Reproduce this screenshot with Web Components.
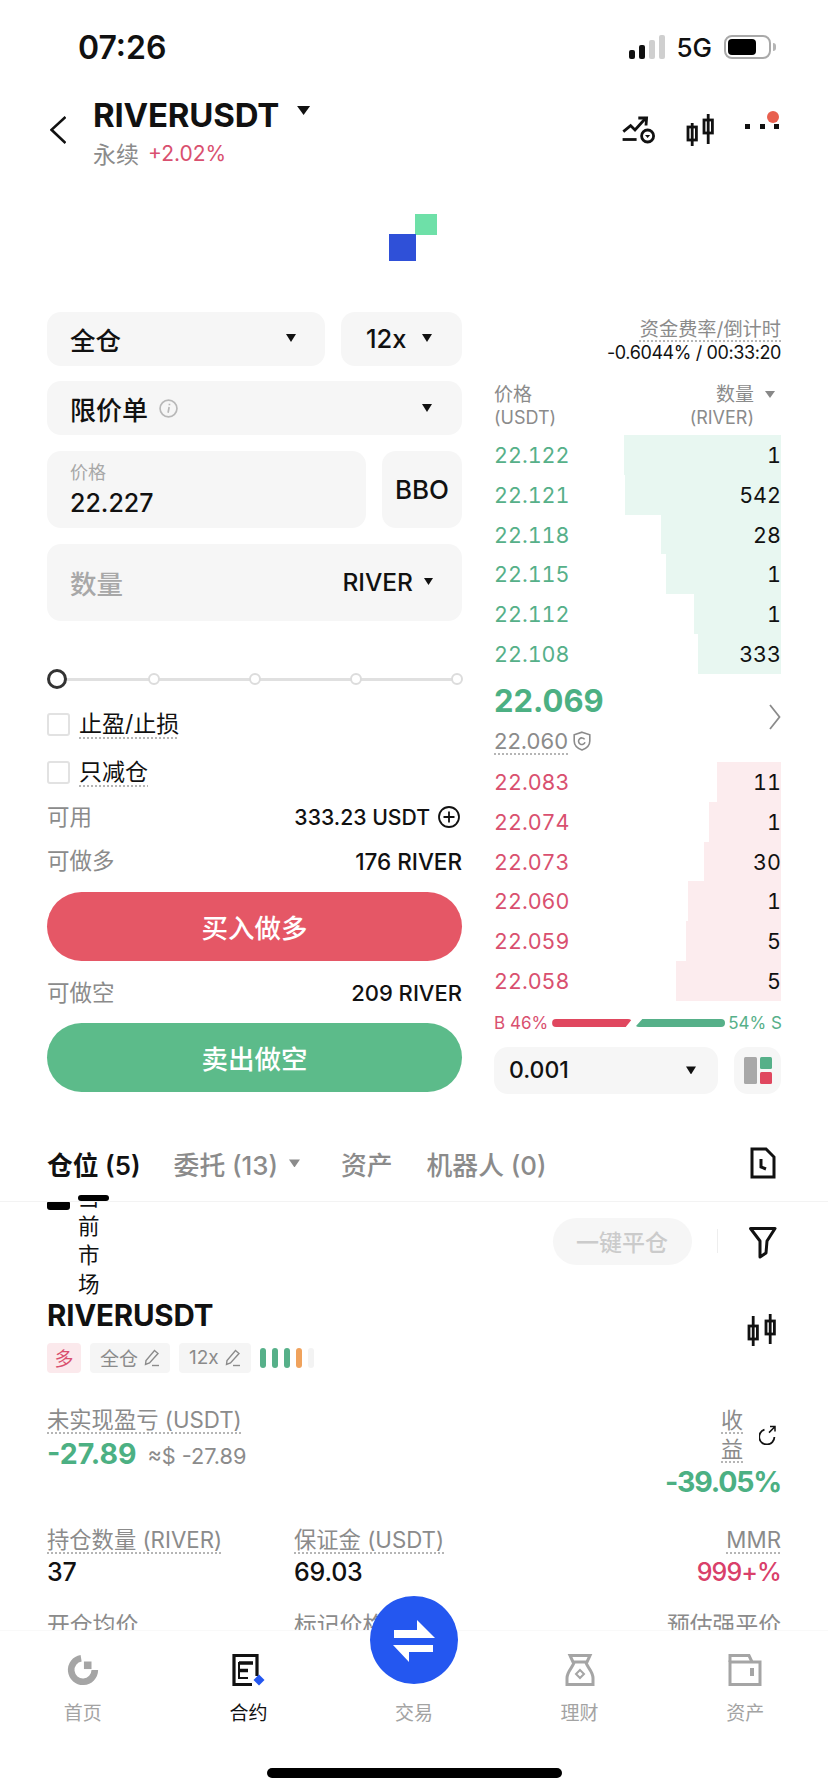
<!DOCTYPE html>
<html lang="zh">
<head>
<meta charset="utf-8">
<title>RIVERUSDT</title>
<style>
  html, body { margin: 0; background: #fff; }
  body { font-family: Inter, "Noto Sans CJK SC", sans-serif; color: #111; }
</style>
</head>
<body>
<trade-app></trade-app>

<script>
const GREEN = "#56b089";
const RED = "#d9506f";
const GRAY = "#8b8b8b";

class CaretMark extends HTMLElement {
    constructor() {
        super();
        this.attachShadow({mode: "open"}).innerHTML = `
            <style>
                :host { display: inline-block; width: 10px; height: 8px; background: #111;
                    clip-path: polygon(0 0, 100% 0, 50% 100%); flex: none; }
            </style>`;
    }
}

class StatusBar extends HTMLElement {
    constructor() {
        super();
        this.attachShadow({mode: "open"}).innerHTML = `
            <style>
                :host { display: flex; align-items: center; height: 94px; padding: 0 52px 0 78px; box-sizing: border-box; }
                .time { font-size: 32px; font-weight: 600; letter-spacing: 0; }
                .right { margin-left: auto; display: flex; align-items: center; }
                .signal { display: flex; align-items: flex-end; gap: 4px; height: 24px; }
                .signal i { display: block; width: 6px; border-radius: 2px; background: #111; }
                .signal i.off { background: #cfcfcf; }
                .net { font-size: 26px; font-weight: 500; margin: 0 12px 0 11px; }
                .battery { width: 47px; height: 24px; box-sizing: border-box; border: 2px solid #a9a9a9; border-radius: 8px; padding: 2px; }
                .battery b { display: block; width: 28px; height: 16px; background: #000; border-radius: 4px; }
                .nub { width: 3px; height: 8px; margin-left: 2px; background: #b5b5b5; border-radius: 0 3px 3px 0; }
            </style>
            <span class="time">07:26</span>
            <div class="right">
                <div class="signal">
                    <i style="height:9px"></i><i style="height:14px"></i>
                    <i class="off" style="height:19px"></i><i class="off" style="height:24px"></i>
                </div>
                <span class="net">5G</span>
                <div class="battery"><b></b></div>
                <div class="nub"></div>
            </div>`;
    }
}

class MarketHeader extends HTMLElement {
    constructor() {
        super();
        this.attachShadow({mode: "open"}).innerHTML = `
            <style>
                :host { display: flex; align-items: flex-start; padding: 1px 47px 0 50px; }
                .back { margin-top: 21px; margin-right: 27px; flex: none; }
                .title { display: flex; align-items: center; height: 40px; font-size: 33px; font-weight: 700; letter-spacing: -0.2px; }
                .title caret-mark { width: 13px; height: 9px; margin: -9px 0 0 18px; }
                .sub { display: flex; align-items: center; height: 32px; margin-top: 2px; font-size: 23px; color: ${GRAY}; }
                .sub span { font-size: 21px; color: ${RED}; margin-left: 9px; }
                .tools { margin-left: auto; display: flex; align-items: flex-start; margin-top: 18px; }
                svg { display: block; }
            </style>
            <svg class="back" width="16" height="28" viewBox="0 0 16 28" fill="none" stroke="#111" stroke-width="2.6"><path d="M15.5 1 1.5 13.8 15.5 27"/></svg>
            <div>
                <div class="title">RIVERUSDT<caret-mark></caret-mark></div>
                <div class="sub">永续<span>+2.02%</span></div>
            </div>
            <div class="tools">
                <svg width="40" height="30" viewBox="0 0 40 30" fill="none" stroke="#111" stroke-width="2.8" style="margin-top:2px">
                    <path d="M3.3 16.6 10.6 10.6 15 15 26 2.8"/><path d="M18.3 3H26.6L26 10.5"/><path d="M2.6 24.5H16.6"/>
                    <circle cx="27.6" cy="21" r="6"/><path d="M25 20h5.2l-2.6 3z" fill="#111" stroke="none"/>
                </svg>
                <svg width="32" height="34" viewBox="0 0 32 34" fill="none" stroke="#111" stroke-width="2.8" style="margin:0 0 0 25px">
                    <rect x="3" y="14" width="8.4" height="13"/><path d="M7.2 10V33"/>
                    <rect x="19" y="7" width="8.4" height="13"/><path d="M23.2 1V31"/>
                </svg>
                <svg width="36" height="22" viewBox="0 0 36 22" style="margin:-2px 0 0 28px">
                    <rect x="0" y="13" width="5" height="5" fill="#111"/><rect x="15" y="13" width="5" height="5" fill="#111"/>
                    <rect x="29" y="13" width="5" height="5" fill="#111"/><circle cx="28" cy="6" r="6" fill="#e8604f"/>
                </svg>
            </div>`;
    }
}

class LoadingMark extends HTMLElement {
    constructor() {
        super();
        this.attachShadow({mode: "open"}).innerHTML = `
            <style>
                :host { display: flex; justify-content: center; margin: 45px 2px 0 0; }
                svg { display: block; }
            </style>
            <svg width="48" height="47" viewBox="0 0 48 47"><rect x="26" y="0" width="22" height="21" fill="#6ee0a8"/><rect x="0" y="20" width="27" height="27" fill="#2f50d8"/></svg>`;
    }
}

class FormBox extends HTMLElement {
    constructor() {
        super();
        this.attachShadow({mode: "open"}).innerHTML = `
            <style>
                :host { display: flex; align-items: center; justify-content: space-between; box-sizing: border-box;
                    height: 54px; padding: 0 29px 0 23px; background: #f6f6f6; border-radius: 14px; font-size: 25.5px; font-weight: 500; }
            </style>
            <slot></slot>`;
    }
}

class CheckRow extends HTMLElement {
    constructor() {
        super();
        this.attachShadow({mode: "open"}).innerHTML = `
            <style>
                :host { display: flex; align-items: center; height: 24px; font-size: 23px; line-height: 24px; }
                i { width: 19px; height: 19px; border: 2px solid #e2e2e2; border-radius: 3px; margin-right: 9px; flex: none; }
                span { text-decoration: underline dotted #b5b5b5 2px; text-underline-offset: 5px; text-decoration-skip-ink: none; }
            </style>
            <i></i><span><slot></slot></span>`;
    }
}

class InfoRow extends HTMLElement {
    constructor() {
        super();
        this.attachShadow({mode: "open"}).innerHTML = `
            <style>
                :host { display: flex; align-items: center; justify-content: space-between; height: 30px; }
                .label { font-size: 22.5px; color: ${GRAY}; margin-top: -4px; }
                .value { display: flex; align-items: center; font-weight: 500; }
            </style>
            <span class="label">${this.getAttribute("label")}</span>
            <span class="value" style="font-size:${this.getAttribute("size") || 22.5}px"><slot></slot></span>`;
    }
}

class ActionButton extends HTMLElement {
    constructor() {
        super();
        this.attachShadow({mode: "open"}).innerHTML = `
            <style>
                :host { display: flex; align-items: center; justify-content: center; height: 69px; border-radius: 35px;
                    color: #fff; font-size: 26.5px; font-weight: 500; background: ${this.getAttribute("color")}; }
            </style>
            <slot></slot>`;
    }
}

class OrderForm extends HTMLElement {
    constructor() {
        super();
        this.attachShadow({mode: "open"}).innerHTML = `
            <style>
                :host { display: block; width: 415px; }
                .row { display: flex; gap: 16px; }
                .first form-box { padding-bottom: 2px; }
                .stack { margin-top: 15px; padding-right: 30px; }
                .grow { flex: 1; }
                .lev { width: 121px; padding: 0 30px 0 25px; }
                .left { display: flex; align-items: center; gap: 11px; font-size: 26px; }
                .price { height: 77px; display: block; padding-top: 11px; }
                .price small { display: block; font-size: 18px; font-weight: 400; line-height: 22px; color: #a8a8a8; }
                .price b { display: block; font-size: 25px; font-weight: 500; line-height: 34px; margin-top: 2px; }
                .bbo { width: 80px; height: 77px; padding: 0; justify-content: center; font-size: 26px; }
                .qty { height: 77px; padding-right: 29px; margin-top: 16px; }
                .qty span { font-size: 26.5px; font-weight: 500; color: #a8a8a8; }
                .unit { display: flex; align-items: center; gap: 11px; font-size: 24.5px; margin-top: -2px; }
                .unit caret-mark { width: 9px; height: 7px; }
                .slider { position: relative; display: flex; align-items: center; gap: 89px; height: 20px; margin-top: 48px; }
                .slider::before { content: ""; position: absolute; left: 4px; right: 4px; top: 9px; height: 2.5px; background: #e0e0e0; }
                .slider i { position: relative; box-sizing: border-box; width: 12px; height: 12px; border-radius: 50%; background: #fff; border: 2px solid #dcdcdc; flex: none; }
                .slider i.on { width: 20px; height: 20px; border: 3.5px solid #333; margin-right: -8px; }
                check-row { margin-top: 23px; }
                check-row + check-row { margin-top: 24px; }
                .avail { margin-top: 18px; }
                .long { margin-top: 14px; }
                action-button { margin-top: 16px; }
                .short { margin-top: 17px; }
                .short + action-button { margin-top: 15px; }
                svg { display: block; }
            </style>
            <div class="row first">
                <form-box class="grow">全仓<caret-mark></caret-mark></form-box>
                <form-box class="lev">12x<caret-mark></caret-mark></form-box>
            </div>
            <form-box class="stack">
                <span class="left">限价单
                    <svg width="19" height="19" viewBox="0 0 18 18" fill="none" stroke="#b8b8b8" stroke-width="1.6"><circle cx="9" cy="9" r="8"/><path d="M9.6 7.6 8.6 13M9.9 4.4v1.6"/></svg>
                </span>
                <caret-mark></caret-mark>
            </form-box>
            <div class="row" style="margin-top:16px">
                <form-box class="grow price"><small>价格</small><b>22.227</b></form-box>
                <form-box class="bbo">BBO</form-box>
            </div>
            <form-box class="qty"><span>数量</span><div class="unit">RIVER<caret-mark></caret-mark></div></form-box>
            <div class="slider"><i class="on"></i><i></i><i></i><i></i><i></i></div>
            <check-row>止盈/止损</check-row>
            <check-row>只减仓</check-row>
            <info-row class="avail" label="可用" size="21.2">333.23 USDT
                <svg width="22" height="22" viewBox="0 0 22 22" fill="none" stroke="#111" stroke-width="1.8" style="margin:0 2px 0 8px"><circle cx="11" cy="11" r="10"/><path d="M5.5 11h11M11 5.5v11"/></svg>
            </info-row>
            <info-row class="long" label="可做多">176 RIVER</info-row>
            <action-button color="#e55766">买入做多</action-button>
            <info-row class="short" label="可做空" size="22">209 RIVER</info-row>
            <action-button color="#5cbb8a">卖出做空</action-button>`;
    }
}

class BookRow extends HTMLElement {
    constructor() {
        super();
        const side = this.getAttribute("side");
        const w = this.getAttribute("bar") + "px";
        const tint = side === "ask" ? "#e8f7f1" : "#fcecee";
        this.attachShadow({mode: "open"}).innerHTML = `
            <style>
                :host { display: flex; align-items: center; justify-content: space-between; height: 39.83px; font-size: 21.5px;
                    font-feature-settings: "tnum" 1; background: linear-gradient(to left, ${tint} ${w}, transparent ${w}); }
                .p { color: ${side === "ask" ? GREEN : RED}; }
            </style>
            <span class="p">${this.getAttribute("price")}</span><span>${this.getAttribute("qty")}</span>`;
    }
}

class OrderBook extends HTMLElement {
    constructor() {
        super();
        const row = (side, r) => `<book-row side="${side}" price="${r[0]}" qty="${r[1]}" bar="${r[2]}"></book-row>`;
        const asks = [["22.122", 1, 157], ["22.121", 542, 156], ["22.118", 28, 120], ["22.115", 1, 115], ["22.112", 1, 87], ["22.108", 333, 83]];
        const bids = [["22.083", 11, 64], ["22.074", 1, 72], ["22.073", 30, 77], ["22.060", 1, 93], ["22.059", 5, 95], ["22.058", 5, 105]];
        this.attachShadow({mode: "open"}).innerHTML = `
            <style>
                :host { display: block; width: 287px; }
                .dot { text-decoration: underline dotted #b5b5b5 2px; text-underline-offset: 4px; text-decoration-skip-ink: none; }
                .funding { text-align: right; padding-top: 5px; }
                .funding div { line-height: 24px; }
                .funding .a { font-size: 19.2px; color: ${GRAY}; }
                .funding .b { font-size: 18px; letter-spacing: -0.4px; white-space: nowrap; }
                .heads { display: flex; justify-content: space-between; margin: 18px 0 6px; font-size: 19px; line-height: 23px; color: ${GRAY}; }
                .heads small { font-size: 18px; }
                .heads .r { text-align: right; padding-right: 27px; position: relative; }
                .heads caret-mark { position: absolute; right: 6px; top: 8px; width: 10px; height: 7px; background: #888; }
                .mid { display: flex; justify-content: space-between; align-items: center; height: 88px; }
                .last { font-size: 31px; font-weight: 700; color: #4cb083; line-height: 38px; margin-top: 3px; }
                .mark { display: flex; align-items: center; gap: 5px; font-size: 22px; color: ${GRAY}; line-height: 30px; margin-top: 6px; }
                .ratio { display: flex; align-items: center; justify-content: space-between; height: 18px; margin-top: 13px; font-size: 17px; white-space: nowrap; }
                .ratio i { display: block; height: 8px; border-radius: 4px; flex: none; }
                .ratio .buy { width: 80px; background: #e0475f; clip-path: polygon(0 0, 100% 0, 92% 100%, 0 100%); margin-left: 4px; }
                .ratio .sell { width: 90px; background: #56b089; clip-path: polygon(8% 0, 100% 0, 100% 100%, 0 100%); margin: 0 3px 0 3px; }
                .tail { display: flex; gap: 16px; margin-top: 15px; }
                .depth { flex: 1; height: 47px; padding: 0 22px 0 15px; font-size: 23px; }
                .layout { width: 47px; height: 47px; padding: 0 0 0 10px; justify-content: flex-start; }
                svg { display: block; }
            </style>
            <div class="funding">
                <div class="a"><span class="dot">资金费率/倒计时</span></div>
                <div class="b">-0.6044% / 00:33:20</div>
            </div>
            <div class="heads">
                <div>价格<br><small>(USDT)</small></div>
                <div class="r">数量<caret-mark></caret-mark><br><small>(RIVER)</small></div>
            </div>
            ${asks.map(r => row("ask", r)).join("")}
            <div class="mid">
                <div>
                    <div class="last">22.069</div>
                    <div class="mark"><span class="dot">22.060</span>
                        <svg width="18" height="20" viewBox="0 0 18 20" fill="none" stroke="#8b8b8b" stroke-width="1.6"><path d="M9 1.2 16.8 3.8V10C16.8 14.5 13 17.6 9 19 5 17.6 1.2 14.5 1.2 10V3.8Z"/><path d="M11.6 8.4A3.3 3.3 0 1 0 12 11.2"/></svg>
                    </div>
                </div>
                <svg width="12" height="26" viewBox="0 0 12 26" fill="none" stroke="#8b8b8b" stroke-width="1.8" style="margin:0 0 2px 0"><path d="M1 1 10.5 13 1 25"/></svg>
            </div>
            ${bids.map(r => row("bid", r)).join("")}
            <div class="ratio">
                <span style="color:${RED}">B 46%</span><i class="buy"></i><i class="sell"></i><span style="color:${GREEN}">54% S</span>
            </div>
            <div class="tail">
                <form-box class="depth">0.001<caret-mark></caret-mark></form-box>
                <form-box class="layout">
                    <svg width="28" height="27" viewBox="0 0 28 27"><rect width="13" height="27" rx="1.5" fill="#a8a8a8"/><rect x="16" width="12" height="12" rx="1.5" fill="#56b089"/><rect x="16" y="15" width="12" height="12" rx="1.5" fill="#e0475f"/></svg>
                </form-box>
            </div>`;
    }
}

class PositionTabs extends HTMLElement {
    constructor() {
        super();
        this.attachShadow({mode: "open"}).innerHTML = `
            <style>
                :host { display: flex; align-items: center; box-sizing: border-box; height: 108px; padding: 32px 51px 0 47px;
                    position: relative; z-index: 1; background: #fff;
                    border-bottom: 1.5px solid #f3f3f3; font-size: 25.8px; color: ${GRAY}; font-weight: 500; }
                .on { color: #111; font-weight: 600; }
                span { white-space: nowrap; }
                caret-mark { width: 11px; height: 8px; background: #8b8b8b; margin-left: 11px; }
                svg { display: block; margin-left: auto; }
            </style>
            <span class="on">仓位 (5)</span>
            <span style="margin-left:33px">委托 (13)</span><caret-mark></caret-mark>
            <span style="margin-left:41px">资产</span>
            <span style="margin-left:34px">机器人 (0)</span>
            <svg width="28" height="32" viewBox="0 0 28 32" fill="none" stroke="#111" stroke-width="3"><path d="M3 2H17L25 10V30H3Z"/><path d="M12 12V20L17 22"/></svg>`;
    }
}

class StatCell extends HTMLElement {
    constructor() {
        super();
        this.attachShadow({mode: "open"}).innerHTML = `
            <style>
                :host { display: block; }
                .l { font-size: 22.3px; line-height: 28px; color: ${GRAY}; text-decoration: underline dotted #b5b5b5 2px; text-underline-offset: 5px; text-decoration-skip-ink: none; }
                .l.plain { font-size: 22.8px; text-decoration: none; }
                .v { font-size: 25px; font-weight: 500; line-height: 34px; margin-top: 1px; letter-spacing: var(--value-spacing, -0.2px); }
            </style>
            <div><span class="l ${this.hasAttribute("plain") ? "plain" : ""}">${this.getAttribute("label")}</span></div>
            <div class="v" style="color:${this.getAttribute("color") || "#111"}">${this.getAttribute("value") || ""}</div>`;
    }
}

class PositionCard extends HTMLElement {
    constructor() {
        super();
        const pen = `<svg width="16" height="18" viewBox="0 0 16 18" fill="none" stroke="#8b8b8b" stroke-width="1.4"><path d="M10.5 1.5 14 4.5 5.5 14 1.5 15.5 2 11.5Z"/><path d="M8 16.5H15"/></svg>`;
        this.attachShadow({mode: "open"}).innerHTML = `
            <style>
                :host { display: block; padding: 0 47px; }
                .top { position: relative; display: flex; align-items: flex-start; height: 96px; padding-right: 4px; }
                .box { width: 23px; height: 8px; background: #000; border-radius: 1px 1px 3px 3px; margin-right: 8px; flex: none; }
                .stack { width: 22px; margin-top: -19px; font-size: 21.5px; line-height: 29px; flex: none; }
                .bar { position: absolute; z-index: 2; left: 31px; top: -7px; width: 31px; height: 6px; background: #000; border-radius: 3px; }
                .close { margin: 16px 0 0 auto; width: 139px; height: 47px; border-radius: 24px; background: #f6f6f6; color: #cbcbcb;
                    font-size: 23px; font-weight: 500; display: flex; align-items: center; justify-content: center; }
                .sep { width: 1.5px; height: 24px; background: #eee; margin: 27px 31px 0 25px; }
                .filter { margin-top: 25px; }
                .name { display: flex; align-items: center; justify-content: space-between; padding-right: 2px; }
                .sym { font-size: 29.5px; font-weight: 700; line-height: 34px; letter-spacing: -0.2px; }
                .tags { display: flex; gap: 9px; margin-top: 11px; height: 30px; font-size: 19px; color: ${GRAY}; }
                .tag { display: flex; align-items: center; gap: 6px; padding: 0 10px; background: #f5f5f5; border-radius: 4px; }
                .tag.dir { background: #fbe9ec; color: ${RED}; padding: 0 8px; width: 18px; justify-content: center; }
                .tag.dir + .tag { width: 60px; }
                .lamps { display: flex; gap: 6px; align-items: center; }
                .lamps i { width: 6px; height: 20px; border-radius: 3px; background: ${GREEN}; }
                .pnl { display: flex; justify-content: space-between; margin-top: 33px; height: 95px; }
                .pnl .dot { font-size: 22.3px; line-height: 28px; color: ${GRAY}; text-decoration: underline dotted #b5b5b5 2px; text-underline-offset: 5px; text-decoration-skip-ink: none; }
                .amount { display: flex; align-items: baseline; margin-top: 2px; line-height: 36px; }
                .amount b, .roe b { font-size: 28.5px; font-weight: 700; color: #4cb083; }
                .amount span { font-size: 21.7px; color: ${GRAY}; margin-left: 11px; }
                .roe { display: flex; flex-direction: column; align-items: flex-end; }
                .roeh { display: flex; align-items: center; gap: 16px; padding-right: 4px; }
                .roeh .dot { display: block; width: 22px; line-height: 29px; font-size: 22px; }
                .roe b { line-height: 36px; letter-spacing: -1.2px; }
                .grid { display: grid; grid-template-columns: 247px 1fr auto; margin-top: 25px; }
                .grid .e { text-align: right; --value-spacing: -0.9px; }
                .grid.next { margin-top: 22px; }
                svg { display: block; }
            </style>
            <div class="top">
                <div class="box"></div>
                <div class="stack">当前市场</div>
                <div class="bar"></div>
                <div class="close">一键平仓</div>
                <div class="sep"></div>
                <svg class="filter" width="28" height="32" viewBox="0 0 28 32" fill="none" stroke="#111" stroke-width="3" stroke-linejoin="round"><path d="M26 1.5H1.5L11 14V30L17 26 18 14Z"/></svg>
            </div>
            <div class="name">
                <div>
                    <div class="sym">RIVERUSDT</div>
                    <div class="tags">
                        <div class="tag dir">多</div>
                        <div class="tag">全仓${pen}</div>
                        <div class="tag">12x${pen}</div>
                        <div class="lamps"><i></i><i></i><i></i><i style="background:#f0a25c"></i><i style="background:#f3f3f3"></i></div>
                    </div>
                </div>
                <svg width="32" height="34" viewBox="0 0 32 34" fill="none" stroke="#111" stroke-width="2.8" style="margin:0 0 8px">
                    <rect x="2" y="12" width="8.4" height="13"/><path d="M6.2 2V32"/>
                    <rect x="19" y="7" width="8.4" height="13"/><path d="M23.2 0V30"/>
                </svg>
            </div>
            <div class="pnl">
                <div>
                    <span class="dot">未实现盈亏 (USDT)</span>
                    <div class="amount"><b>-27.89</b><span>≈$ -27.89</span></div>
                </div>
                <div class="roe">
                    <div class="roeh">
                        <span class="dot">收益</span>
                        <svg width="18" height="20" viewBox="0 0 18 20" fill="none" stroke="#111" stroke-width="1.8"><path d="M5.5 4.6A7.6 7.6 0 1 0 15.4 12"/><path d="M10 7.6 15.6 2M11 1.6h5v5" stroke-width="1.5"/></svg>
                    </div>
                    <b>-39.05%</b>
                </div>
            </div>
            <div class="grid">
                <stat-cell label="持仓数量 (RIVER)" value="37"></stat-cell>
                <stat-cell label="保证金 (USDT)" value="69.03"></stat-cell>
                <stat-cell class="e" label="MMR" value="999+%" color="#d9406a"></stat-cell>
            </div>
            <div class="grid next">
                <stat-cell plain label="开仓均价"></stat-cell>
                <stat-cell plain label="标记价格"></stat-cell>
                <stat-cell plain class="e" label="预估强平价"></stat-cell>
            </div>`;
    }
}

class NavItem extends HTMLElement {
    constructor() {
        super();
        this.attachShadow({mode: "open"}).innerHTML = `
            <style>
                :host { display: flex; flex-direction: column; align-items: center; flex: 1; padding-top: 22px; color: #a3a3a3; }
                :host([active]) { color: #111; }
                .icon { height: 34px; display: flex; justify-content: center; }
                .label { font-size: 19px; line-height: 24px; margin-top: 15px; }
            </style>
            <div class="icon"><slot></slot></div>
            <div class="label">${this.getAttribute("label")}</div>`;
    }
}

class BottomNav extends HTMLElement {
    constructor() {
        super();
        this.attachShadow({mode: "open"}).innerHTML = `
            <style>
                :host { position: absolute; z-index: 3; left: 0; right: 0; bottom: 0; height: 162px; background: #fff; border-top: 1px solid #f9f9f9; box-sizing: border-box; }
                .items { display: flex; }
                .fab { position: absolute; left: 370px; top: -35px; width: 88px; height: 88px; border-radius: 50%; background: #2457f0; }
                .home { width: 295px; height: 10px; margin: 42px auto 0; border-radius: 5px; background: #000; }
                svg { display: block; }
            </style>
            <div class="items">
                <nav-item label="首页">
                    <svg width="36" height="34" viewBox="0 0 36 36" fill="none"><path d="M16 5.6A12.5 12.5 0 1 0 30.5 18" stroke="#a5a5a5" stroke-width="7"/><rect x="19" y="9" width="8" height="8" fill="#a5a5a5"/></svg>
                </nav-item>
                <nav-item active label="合约">
                    <svg width="36" height="34" viewBox="0 0 36 34" fill="none"><path d="M27 23V2.5H4V31.5H22" stroke="#111" stroke-width="3.2"/><path d="M9 10H23M9 17.5H18" stroke="#111" stroke-width="3.4"/><path d="M9 9V25H18" stroke="#111" stroke-width="2"/><path d="M29 21.5 34.5 27 29 32.5 23.5 27Z" fill="#2457f0"/></svg>
                </nav-item>
                <nav-item label="交易"><span style="width:36px"></span></nav-item>
                <nav-item label="理财">
                    <svg width="32" height="34" viewBox="0 0 32 34" fill="none" stroke="#a5a5a5" stroke-width="3"><path d="M6 2.5H26L23 9H9Z"/><path d="M10 9C10 13 3 18 3 25V31.5H29V25C29 18 22 13 22 9"/><path d="M16 17 20 21 16 25 12 21Z" stroke-width="2"/></svg>
                </nav-item>
                <nav-item label="资产">
                    <svg width="36" height="34" viewBox="0 0 36 34" fill="none" stroke="#a5a5a5" stroke-width="3"><path d="M3 9V2.5H22L25 9"/><rect x="3" y="9" width="30" height="22.5"/><path d="M25 15V23" stroke-width="4"/></svg>
                </nav-item>
            </div>
            <div class="fab">
                <svg width="88" height="88" viewBox="0 0 88 88" fill="#fff"><path d="M24 34H47V24L65 42H24Z"/><path d="M63 49V56H39V66L23 49Z"/></svg>
            </div>
            <div class="home"></div>`;
    }
}

class TradeApp extends HTMLElement {
    constructor() {
        super();
        this.attachShadow({mode: "open"}).innerHTML = `
            <style>
                :host { display: block; position: relative; width: 828px; height: 1792px; overflow: hidden; background: #fff; }
                .trade { display: flex; gap: 32px; padding-left: 47px; margin-top: 51px; }
            </style>
            <status-bar></status-bar>
            <market-header></market-header>
            <loading-mark></loading-mark>
            <div class="trade">
                <order-form></order-form>
                <order-book></order-book>
            </div>
            <position-tabs></position-tabs>
            <position-card></position-card>
            <bottom-nav></bottom-nav>`;
    }
}

customElements.define("caret-mark", CaretMark);
customElements.define("status-bar", StatusBar);
customElements.define("market-header", MarketHeader);
customElements.define("loading-mark", LoadingMark);
customElements.define("form-box", FormBox);
customElements.define("check-row", CheckRow);
customElements.define("info-row", InfoRow);
customElements.define("action-button", ActionButton);
customElements.define("order-form", OrderForm);
customElements.define("book-row", BookRow);
customElements.define("order-book", OrderBook);
customElements.define("position-tabs", PositionTabs);
customElements.define("stat-cell", StatCell);
customElements.define("position-card", PositionCard);
customElements.define("nav-item", NavItem);
customElements.define("bottom-nav", BottomNav);
customElements.define("trade-app", TradeApp);
</script>
</body>
</html>
